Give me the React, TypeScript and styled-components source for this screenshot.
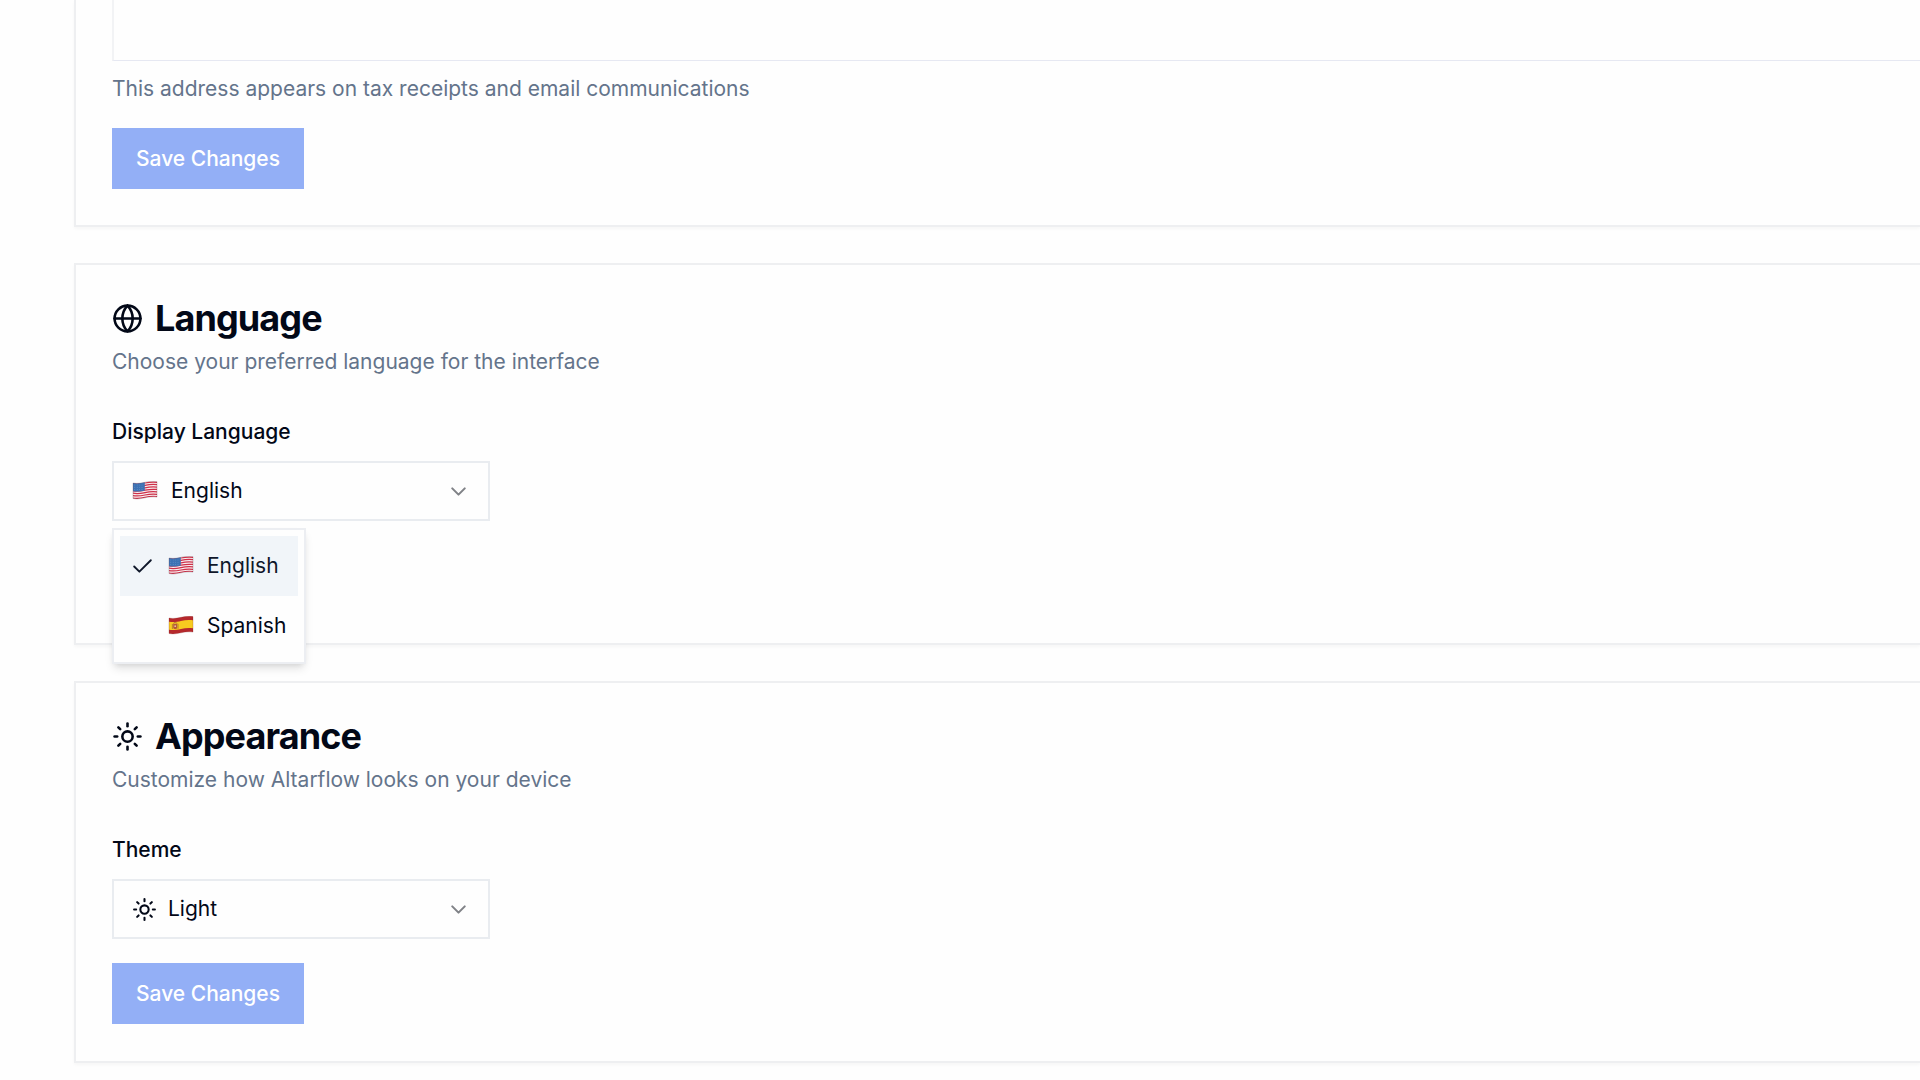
import React, { useState } from "react";
import styled, { createGlobalStyle } from "styled-components";
import { Check, ChevronDown, Globe, Sun } from "lucide-react";

const GlobalStyle = createGlobalStyle`
  *, *::before, *::after { box-sizing: border-box; }
  body {
    margin: 0;
    overflow-x: hidden;
    background: #fefefe;
    color: #020817;
    font-family: Inter, "Liberation Sans", sans-serif;
    font-size: 21px;
    line-height: 32px;
  }
`;

const Page = styled.main`
  display: flex;
  flex-direction: column;
  gap: 36px;
  padding: 0 0 16px 74px;
`;

const Card = styled.section<{ $continued?: boolean }>`
  display: flex;
  flex-direction: column;
  min-height: ${(p) => (p.$continued ? "0" : "382px")};
  border: 2px solid #eeeff1;
  border-right: 0;
  border-top-width: ${(p) => (p.$continued ? "0" : "2px")};
  padding: ${(p) => (p.$continued ? "0 0 36px 36px" : "34px 0 36px 36px")};
  box-shadow: 0 2px 3px rgba(0, 0, 0, 0.03);
`;

const CardHeader = styled.header`
  display: flex;
  flex-direction: column;
  gap: 10px;
  margin-bottom: 39px;
`;

const Title = styled.h2`
  display: flex;
  align-items: center;
  gap: 12px;
  margin: 0;
  font-size: 36px;
  line-height: 38px;
  font-weight: 700;
  letter-spacing: -0.025em;
`;

const Muted = styled.p`
  margin: 0;
  line-height: 30px;
  color: #64748b;
`;

const Form = styled.form`
  display: flex;
  flex-direction: column;
  align-items: flex-start;
  gap: 24px;
`;

const Field = styled.div`
  display: flex;
  flex-direction: column;
  gap: 13px;
  width: 100%;
`;

const Label = styled.label`
  font-weight: 500;
`;

const AddressBox = styled.textarea`
  display: block;
  width: 100%;
  height: 61px;
  padding: 0 19px;
  border: 0 solid #e6e8f2;
  border-bottom-width: 1px;
  border-left: 2px solid #f2f3f5;
  background: transparent;
  font: inherit;
  resize: none;
  outline: none;
`;

const SaveButton = styled.button`
  height: 61px;
  padding: 0 24px;
  border: 0;
  background: #93aff6;
  color: #fff;
  font: inherit;
  font-weight: 500;
  white-space: nowrap;
`;

const SelectShell = styled.div`
  position: relative;
  display: grid;
  grid-template-columns: 1fr;
  align-items: center;
  width: 378px;
`;

const Select = styled.select<{ $inset: number }>`
  grid-area: 1 / 1;
  width: 100%;
  height: 60px;
  padding: 0 56px 0 ${(p) => p.$inset}px;
  border: 2px solid #e9ecf0;
  border-radius: 0;
  background: #fefefe;
  color: inherit;
  font: inherit;
  appearance: none;
  outline: none;
`;

const Adornment = styled.span<{ $end?: boolean }>`
  grid-area: 1 / 1;
  justify-self: ${(p) => (p.$end ? "end" : "start")};
  display: flex;
  margin: 0 19px 0 20px;
  color: ${(p) => (p.$end ? "#808287" : "inherit")};
  pointer-events: none;
`;

const Menu = styled.div`
  position: absolute;
  z-index: 10;
  top: calc(100% + 7px);
  left: 0;
  display: flex;
  flex-direction: column;
  padding: 6px;
  border: 2px solid #eceef2;
  background: #fefefe;
  box-shadow: 0 6px 9px -2px rgba(0, 0, 0, 0.12), 0 3px 6px -3px rgba(0, 0, 0, 0.1);
`;

const MenuItem = styled.button<{ $selected: boolean }>`
  display: grid;
  grid-template-columns: 26px 27px auto;
  align-items: center;
  gap: 12px;
  height: 60px;
  padding: 0 12px 0 10px;
  border: 0;
  background: ${(p) => (p.$selected ? "#f1f5f9" : "transparent")};
  color: ${(p) => (p.$selected ? "#0f172a" : "#020817")};
  font: inherit;
  text-align: left;
`;

const FlagSvg = styled.svg`
  display: block;
  width: 26px;
  height: 20px;
`;

const ItemIcon = styled.span`
  display: flex;
`;

const WAVE = "M1 2C5 2.9 9 2.2 13 1.3S21 0 25 .6V16.1C21 15.5 17 15.9 13 16.8S5 18.4 1 17.5Z";

function UsFlag({ id }: { id: string }) {
  return (
    <FlagSvg viewBox="0 0 26 20" aria-hidden="true">
      <clipPath id={id}>
        <path d={WAVE} />
      </clipPath>
      <g clipPath={`url(#${id})`}>
        <rect width="26" height="20" fill="#f8eef0" />
        {[0, 1, 2, 3, 4, 5, 6].map((n) => (
          <path
            key={n}
            d={`M0 ${2.4 + n * 2.4}C5 ${3.7 + n * 2.4} 9 ${2.9 + n * 2.4} 13 ${2 + n * 2.4}S21 ${0.7 + n * 2.4} 26 ${1.4 + n * 2.4}`}
            fill="none"
            stroke="#cf3049"
            strokeWidth="1.25"
          />
        ))}
        <path d="M0 0h12.8v9.4C9 10.4 5 11 0 10Z" fill="#3d72b4" />
        <g fill="#8fb2dc">
          {[2.8, 5.2, 7.6, 10].map((x) =>
            [4, 6.2, 8.4].map((y) => <circle key={`${x}-${y}`} cx={x} cy={y} r=".35" />)
          )}
        </g>
      </g>
      <path d={WAVE} fill="none" stroke="#68444f" strokeOpacity=".45" strokeWidth=".6" />
    </FlagSvg>
  );
}

function SpainFlag({ id }: { id: string }) {
  return (
    <FlagSvg viewBox="0 0 26 20" aria-hidden="true">
      <clipPath id={id}>
        <path d={WAVE} />
      </clipPath>
      <g clipPath={`url(#${id})`}>
        <rect width="26" height="20" fill="#b5282c" />
        <path d="M0 5.4C5 6.7 9 5.9 13 5S21 3.7 26 4.4V12.4C21 11.7 17 12.1 13 13S5 14.6 0 13.7Z" fill="#f7cb20" />
        <path d="M5.2 7.8h4v3.8c0 2.2-4 2.2-4 0Z" fill="#b6583a" />
        <path d="M5.4 7.6c0-1.6 3.6-1.6 3.6 0M4.4 8v5M10 7.8v5" fill="none" stroke="#a8722d" strokeWidth=".8" />
        <circle cx="7.2" cy="10.2" r=".9" fill="#e8c0a0" />
      </g>
      <path d={WAVE} fill="none" stroke="#7d2020" strokeOpacity=".4" strokeWidth=".6" />
    </FlagSvg>
  );
}

const languages = [
  { value: "en", name: "English", Flag: UsFlag },
  { value: "es", name: "Spanish", Flag: SpainFlag },
];

function LanguageForm() {
  const [language, setLanguage] = useState("en");
  const [open, setOpen] = useState(true);
  const Current = languages.find((l) => l.value === language)!.Flag;

  return (
    <Form>
      <Field>
        <Label htmlFor="display-language">Display Language</Label>
        <SelectShell>
          <Select
            id="display-language"
            $inset={57}
            value={language}
            onChange={(e) => setLanguage(e.target.value)}
            onMouseDown={(e) => {
              e.preventDefault();
              setOpen(!open);
            }}
          >
            {languages.map((l) => (
              <option key={l.value} value={l.value}>{l.name}</option>
            ))}
          </Select>
          <Adornment><Current id="flag-current" /></Adornment>
          <Adornment $end><ChevronDown size={25} /></Adornment>
          {open && (
            <Menu role="listbox" aria-label="Display Language">
              {languages.map(({ value, name, Flag }) => (
                <MenuItem
                  key={value}
                  type="button"
                  role="option"
                  aria-selected={value === language}
                  $selected={value === language}
                  onClick={() => {
                    setLanguage(value);
                    setOpen(false);
                  }}
                >
                  <ItemIcon>{value === language && <Check size={25} strokeWidth={1.8} />}</ItemIcon>
                  <Flag id={`flag-${value}`} />
                  {name}
                </MenuItem>
              ))}
            </Menu>
          )}
        </SelectShell>
      </Field>
      {!open && <SaveButton type="button">Save Changes</SaveButton>}
    </Form>
  );
}

export default function App() {
  return (
    <>
      <GlobalStyle />
      <Page>
        <Card $continued>
          <Form>
            <Field>
              <AddressBox aria-label="Address" aria-describedby="address-hint" />
              <Muted id="address-hint">This address appears on tax receipts and email communications</Muted>
            </Field>
            <SaveButton type="button">Save Changes</SaveButton>
          </Form>
        </Card>

        <Card>
          <CardHeader>
            <Title><Globe size={31} />Language</Title>
            <Muted>Choose your preferred language for the interface</Muted>
          </CardHeader>
          <LanguageForm />
        </Card>

        <Card>
          <CardHeader>
            <Title><Sun size={31} />Appearance</Title>
            <Muted>Customize how Altarflow looks on your device</Muted>
          </CardHeader>
          <Form>
            <Field>
              <Label htmlFor="theme">Theme</Label>
              <SelectShell>
                <Select id="theme" $inset={54} defaultValue="light">
                  <option value="light">Light</option>
                </Select>
                <Adornment><Sun size={25} /></Adornment>
                <Adornment $end><ChevronDown size={25} /></Adornment>
              </SelectShell>
            </Field>
            <SaveButton type="button">Save Changes</SaveButton>
          </Form>
        </Card>
      </Page>
    </>
  );
}
